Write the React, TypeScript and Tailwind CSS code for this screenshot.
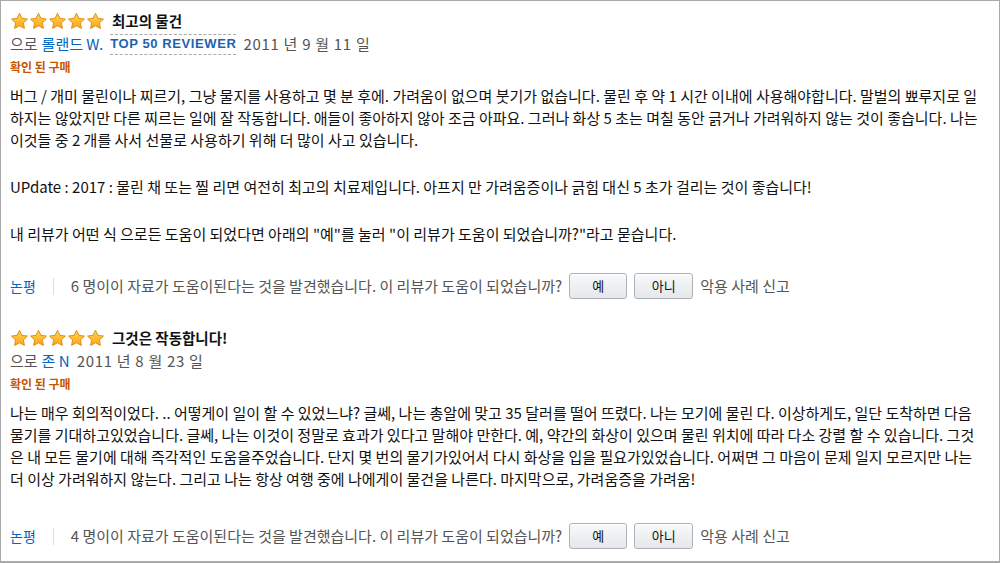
import React from "react";

const KR = { fontFamily: '"Noto Sans CJK KR", "Noto Sans", sans-serif' };

function Star({ id }: { id: string }) {
  return (
    <svg width="19" height="19" viewBox="0 0 24 24" className="shrink-0">
      <defs>
        <linearGradient id={id} x1="0" y1="0" x2="0" y2="1">
          <stop offset="0%" stopColor="#ffd84a" />
          <stop offset="100%" stopColor="#ffa41c" />
        </linearGradient>
      </defs>
      <path
        d="M12 1.6l3.05 6.4 7 .95-5.1 4.85 1.25 6.95L12 17.4l-6.2 3.35 1.25-6.95L1.95 8.95l7-.95z"
        fill={`url(#${id})`}
        stroke="#d9820b"
        strokeWidth="1.1"
        strokeLinejoin="round"
      />
    </svg>
  );
}

function Stars({ prefix }: { prefix: string }) {
  return (
    <div className="flex items-center">
      {[0, 1, 2, 3, 4].map((i) => (
        <Star key={i} id={`${prefix}-g${i}`} />
      ))}
    </div>
  );
}

function HelpfulRow({ count }: { count: number }) {
  return (
    <div className="flex items-center h-[26px] text-[15px] whitespace-nowrap">
      <span className="text-[14px] text-[#0066c0]">논평</span>
      <span className="w-px h-[17px] bg-[#dddddd] mx-[17px]"></span>
      <span className="text-[#555555]">
        {count} 명이이 자료가 도움이된다는 것을 발견했습니다. 이 리뷰가 도움이 되었습니까?
      </span>
      <button className="ml-[7px] w-[58px] h-[26px] rounded-[3px] border border-[#adb1b8] bg-gradient-to-b from-[#f8f9fa] to-[#e5e7ea] text-[13px] text-[#111111] shadow-[inset_0_1px_0_#ffffff]">
        예
      </button>
      <button className="ml-[7px] w-[59px] h-[26px] rounded-[3px] border border-[#adb1b8] bg-gradient-to-b from-[#f8f9fa] to-[#e5e7ea] text-[13px] text-[#111111] shadow-[inset_0_1px_0_#ffffff]">
        아니
      </button>
      <span className="ml-[7px] text-[#555555]">악용 사례 신고</span>
    </div>
  );
}

type Review = {
  id: string;
  title: string;
  author: string;
  badge?: string;
  date: string;
  paragraphs: string[][];
  count: number;
  footerGap: string;
};

const reviews: Review[] = [
  {
    id: "r1",
    title: "최고의 물건",
    author: "롤랜드 W.",
    badge: "TOP 50 REVIEWER",
    date: "2011 년 9 월 11 일",
    paragraphs: [
      [
        "버그 / 개미 물린이나 찌르기, 그냥 물지를 사용하고 몇 분 후에. 가려움이 없으며 붓기가 없습니다. 물린 후 약 1 시간 이내에 사용해야합니다. 말벌의 뾰루지로 일",
        "하지는 않았지만 다른 찌르는 일에 잘 작동합니다. 애들이 좋아하지 않아 조금 아파요. 그러나 화상 5 초는 며칠 동안 긁거나 가려워하지 않는 것이 좋습니다. 나는",
        "이것들 중 2 개를 사서 선물로 사용하기 위해 더 많이 사고 있습니다.",
      ],
      ["UPdate : 2017 : 물린 채 또는 찔 리면 여전히 최고의 치료제입니다. 아프지 만 가려움증이나 긁힘 대신 5 초가 걸리는 것이 좋습니다!"],
      ['내 리뷰가 어떤 식 으로든 도움이 되었다면 아래의 "예"를 눌러 "이 리뷰가 도움이 되었습니까?"라고 묻습니다.'],
    ],
    count: 6,
    footerGap: "mt-[28px]",
  },
  {
    id: "r2",
    title: "그것은 작동합니다!",
    author: "존 N",
    date: "2011 년 8 월 23 일",
    paragraphs: [
      [
        "나는 매우 회의적이었다. .. 어떻게이 일이 할 수 있었느냐? 글쎄, 나는 총알에 맞고 35 달러를 떨어 뜨렸다. 나는 모기에 물린 다. 이상하게도, 일단 도착하면 다음",
        "물기를 기대하고있었습니다. 글쎄, 나는 이것이 정말로 효과가 있다고 말해야 만한다. 예, 약간의 화상이 있으며 물린 위치에 따라 다소 강렬 할 수 있습니다. 그것",
        "은 내 모든 물기에 대해 즉각적인 도움을주었습니다. 단지 몇 번의 물기가있어서 다시 화상을 입을 필요가있었습니다. 어쩌면 그 마음이 문제 일지 모르지만 나는",
        "더 이상 가려워하지 않는다. 그리고 나는 항상 여행 중에 나에게이 물건을 나른다. 마지막으로, 가려움증을 가려움!",
      ],
    ],
    count: 4,
    footerGap: "mt-[33px]",
  },
];

function ReviewBlock({ review }: { review: Review }) {
  return (
    <div>
      {/* Title */}
      <div className="flex items-center h-[20px]">
        <Stars prefix={review.id} />
        <span className="ml-[7px] text-[14.5px] font-bold text-[#111111]">{review.title}</span>
      </div>

      {/* Author line */}
      <div className="flex items-center h-[22px] mt-[2px] text-[15px] text-[#555555] whitespace-nowrap">
        <span>으로</span>
        <span className="ml-[4px] text-[#0066c0]">{review.author}</span>
        {review.badge && (
          <span
            className="ml-[7px] h-[21px] flex items-center border-y border-dashed border-[#aaaaaa] text-[13px] font-bold tracking-[0.6px] text-[#1d62b3]"
            style={{ fontFamily: '"Liberation Sans", Arial, sans-serif' }}
          >
            {review.badge}
          </span>
        )}
        <span className="ml-[7px] tracking-[0.7px]">{review.date}</span>
      </div>

      {/* Verified */}
      <div className="h-[18px] mt-[3px] flex items-center text-[12px] font-bold text-[#c45500]">확인 된 구매</div>

      {/* Body */}
      <div className="mt-[9px] text-[15px] leading-[22px] text-[#111111] whitespace-nowrap">
        {review.paragraphs.map((para, pi) => (
          <p key={pi} className={pi > 0 ? "mt-[25px]" : ""}>
            {para.map((line, li) => (
              <span key={li} className="block">
                {line}
              </span>
            ))}
          </p>
        ))}
      </div>

      <div className={review.footerGap}>
        <HelpfulRow count={review.count} />
      </div>
    </div>
  );
}

export default function App() {
  return (
    <div
      className="w-[1000px] h-[563px] bg-white border border-b-2 border-[#a9a9a9] overflow-hidden pl-[9px] pt-[10px]"
      style={KR}
    >
      <ReviewBlock review={reviews[0]} />
      <div className="mt-[29px]">
        <ReviewBlock review={reviews[1]} />
      </div>
    </div>
  );
}
